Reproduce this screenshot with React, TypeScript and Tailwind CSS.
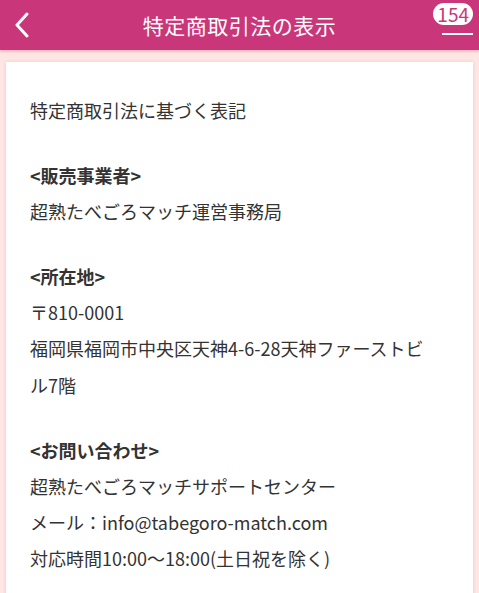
const font = { fontFamily: '"Noto Sans CJK JP", "Noto Sans", sans-serif' }

const sections: { heading?: string; lines: string[] }[] = [
  { lines: ['特定商取引法に基づく表記'] },
  { heading: '<販売事業者>', lines: ['超熟たべごろマッチ運営事務局'] },
  { heading: '<所在地>', lines: ['〒810-0001', '福岡県福岡市中央区天神4-6-28天神ファーストビル7階'] },
  {
    heading: '<お問い合わせ>',
    lines: ['超熟たべごろマッチサポートセンター', 'メール：info@tabegoro-match.com', '対応時間10:00〜18:00(土日祝を除く)'],
  },
]

export default function App() {
  return (
    <div className="min-h-[593px] bg-[#fde6e4]" style={font}>
      <header className="relative flex h-[50px] items-center justify-center bg-[#c9367a] text-white shadow-[0_2px_2px_rgba(200,60,100,0.25)]">
        <button className="absolute left-[12px] top-[11px] flex h-[28px] w-[20px] items-center justify-center">
          <svg width="16" height="26" viewBox="0 0 16 26" fill="none">
            <path d="M13 2L3 13L13 24" stroke="white" strokeWidth="3" strokeLinecap="round" strokeLinejoin="round" />
          </svg>
        </button>
        <h1 className="text-[21px] leading-none tracking-[0.5px]">特定商取引法の表示</h1>
        <div className="absolute right-[6px] top-[3px] flex flex-col items-center">
          <span className="rounded-full bg-white px-[4px] text-[19px] leading-[22px] text-[#c9367a]">154</span>
          <span className="mt-[8px] ml-[8px] h-[2px] w-[31px] bg-white" />
        </div>
      </header>

      <main className="px-[6px] pt-[12px]">
        <div className="min-h-[531px] bg-white pl-[24px] pr-[36px] pt-[30px] pb-[20px] text-[18px] leading-[36.3px] text-[#333] shadow-[0_0_3px_rgba(240,170,170,0.6)]">
          {sections.map((section, i) => (
            <div key={i} className={i === 0 ? '' : 'mt-[28.5px]'}>
              {section.heading && <p className="font-bold">{section.heading}</p>}
              {section.lines.map((line) => (
                <p key={line}>{line}</p>
              ))}
            </div>
          ))}
        </div>
      </main>
    </div>
  )
}
